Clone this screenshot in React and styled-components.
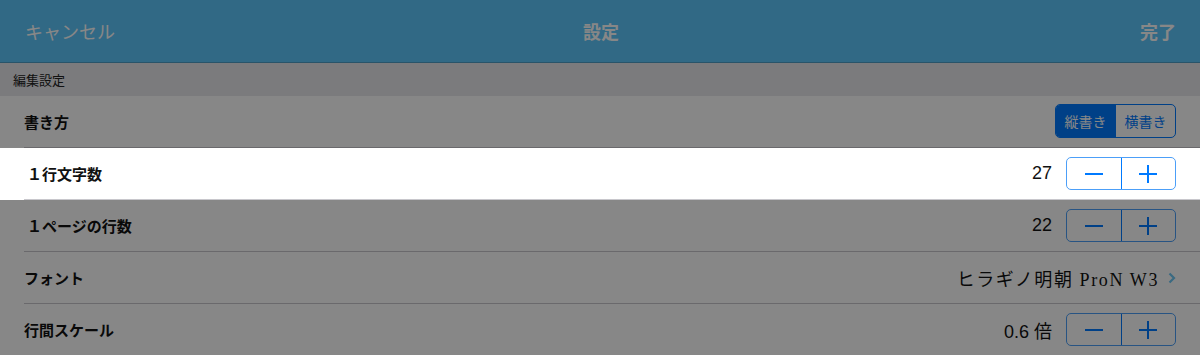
import React from 'react'
import styled, { createGlobalStyle } from 'styled-components'

const Global = createGlobalStyle`
  body {
    margin: 0;
    font-family: "Liberation Sans", "Noto Sans CJK JP", sans-serif;
    background: #ffffff;
  }
`

const Page = styled.div`
  position: relative;
  width: 1200px;
  height: 355px;
  overflow: hidden;
  background: #ffffff;
`

const NavBar = styled.div`
  height: 62px;
  border-bottom: 1px solid #4f9fc6;
  background: #5dc6fb;
  display: grid;
  grid-template-columns: 1fr auto 1fr;
  align-items: center;
  padding: 0 24px 0 25px;
  color: #ffffff;
  font-size: 18px;
`

const NavTitle = styled.div`
  font-weight: bold;
  text-align: center;
  padding-left: 1px;
`

const NavDone = styled.div`
  font-weight: bold;
  text-align: right;
`

const SectionHeader = styled.div`
  height: 33px;
  background: #e8e8ec;
  display: flex;
  align-items: center;
  padding-left: 13px;
  font-size: 13px;
  color: #222;
`

const Row = styled.div`
  position: relative;
  z-index: ${p => (p.$focus ? 2 : 0)};
  background: #ffffff;
  height: 52px;
  padding-left: 24px;
  display: flex;
`

const RowInner = styled.div`
  flex: 1;
  display: flex;
  align-items: center;
  justify-content: space-between;
  padding-right: 24px;
  border-bottom: 1px solid #c8c7cc;
`

const Label = styled.div`
  font-size: 15px;
  font-weight: bold;
  color: #111;
  padding-left: ${p => (p.$pad ? '3px' : '0')};
`

const Right = styled.div`
  display: flex;
  align-items: center;
  gap: ${p => (p.$tight ? '9px' : '14px')};
`

const Value = styled.div`
  font-size: 18px;
  color: #111;
`

const FontValue = styled.div`
  font-family: "Liberation Serif", "Noto Sans CJK JP", serif;
  font-size: 18px;
  color: #111;
  letter-spacing: 1.6px;
`

const Segments = styled.div`
  display: flex;
  width: 121px;
  height: 34px;
  box-sizing: border-box;
  border: 1px solid #007aff;
  border-radius: 5px;
  overflow: hidden;
  margin-top: -2px;
`

const Segment = styled.div`
  flex: 1;
  display: flex;
  align-items: center;
  justify-content: center;
  font-size: 14px;
  background: ${p => (p.$active ? '#007aff' : 'transparent')};
  color: ${p => (p.$active ? '#ffffff' : '#007aff')};
  & + & {
    border-left: 1px solid #007aff;
  }
`

const Stepper = styled.div`
  display: flex;
  width: 110px;
  height: 33px;
  box-sizing: border-box;
  border: 1px solid #4c9ff8;
  border-radius: 5px;
  overflow: hidden;
`

const StepButton = styled.div`
  flex: 1;
  display: flex;
  align-items: center;
  justify-content: center;
  & + & {
    border-left: 1px solid #007aff;
  }
`

const Chevron = styled.svg`
  width: 8px;
  height: 12px;
`

const Dim = styled.div`
  position: absolute;
  inset: 0;
  background: rgba(0, 0, 0, 0.47);
  z-index: 1;
`

const Minus = () => (
  <svg width="20" height="20" viewBox="0 0 20 20">
    <path d="M1 10h18" stroke="#007aff" strokeWidth="2" />
  </svg>
)

const Plus = () => (
  <svg width="20" height="20" viewBox="0 0 20 20">
    <path d="M1 10h18M10 1v18" stroke="#007aff" strokeWidth="2" />
  </svg>
)

const StepperControl = () => (
  <Stepper>
    <StepButton><Minus /></StepButton>
    <StepButton><Plus /></StepButton>
  </Stepper>
)

const App = () => {
  return (
    <>
      <Global />
      <Page>
        <NavBar>
          <div>キャンセル</div>
          <NavTitle>設定</NavTitle>
          <NavDone>完了</NavDone>
        </NavBar>
        <SectionHeader>編集設定</SectionHeader>
        <Row>
          <RowInner>
            <Label>書き方</Label>
            <Segments>
              <Segment $active>縦書き</Segment>
              <Segment>横書き</Segment>
            </Segments>
          </RowInner>
        </Row>
        <Row $focus>
          <RowInner>
            <Label $pad>１行文字数</Label>
            <Right>
              <Value>27</Value>
              <StepperControl />
            </Right>
          </RowInner>
        </Row>
        <Row>
          <RowInner>
            <Label $pad>１ページの行数</Label>
            <Right>
              <Value>22</Value>
              <StepperControl />
            </Right>
          </RowInner>
        </Row>
        <Row>
          <RowInner>
            <Label>フォント</Label>
            <Right $tight>
              <FontValue>ヒラギノ明朝 ProN W3</FontValue>
              <Chevron viewBox="0 0 8 12">
                <path d="M1.5 1.5l4.5 4.5-4.5 4.5" fill="none" stroke="#6fc8f4" strokeWidth="2.2" />
              </Chevron>
            </Right>
          </RowInner>
        </Row>
        <Row>
          <RowInner>
            <Label>行間スケール</Label>
            <Right>
              <Value>0.6 倍</Value>
              <StepperControl />
            </Right>
          </RowInner>
        </Row>
        <Dim />
      </Page>
    </>
  )
}

export default App
